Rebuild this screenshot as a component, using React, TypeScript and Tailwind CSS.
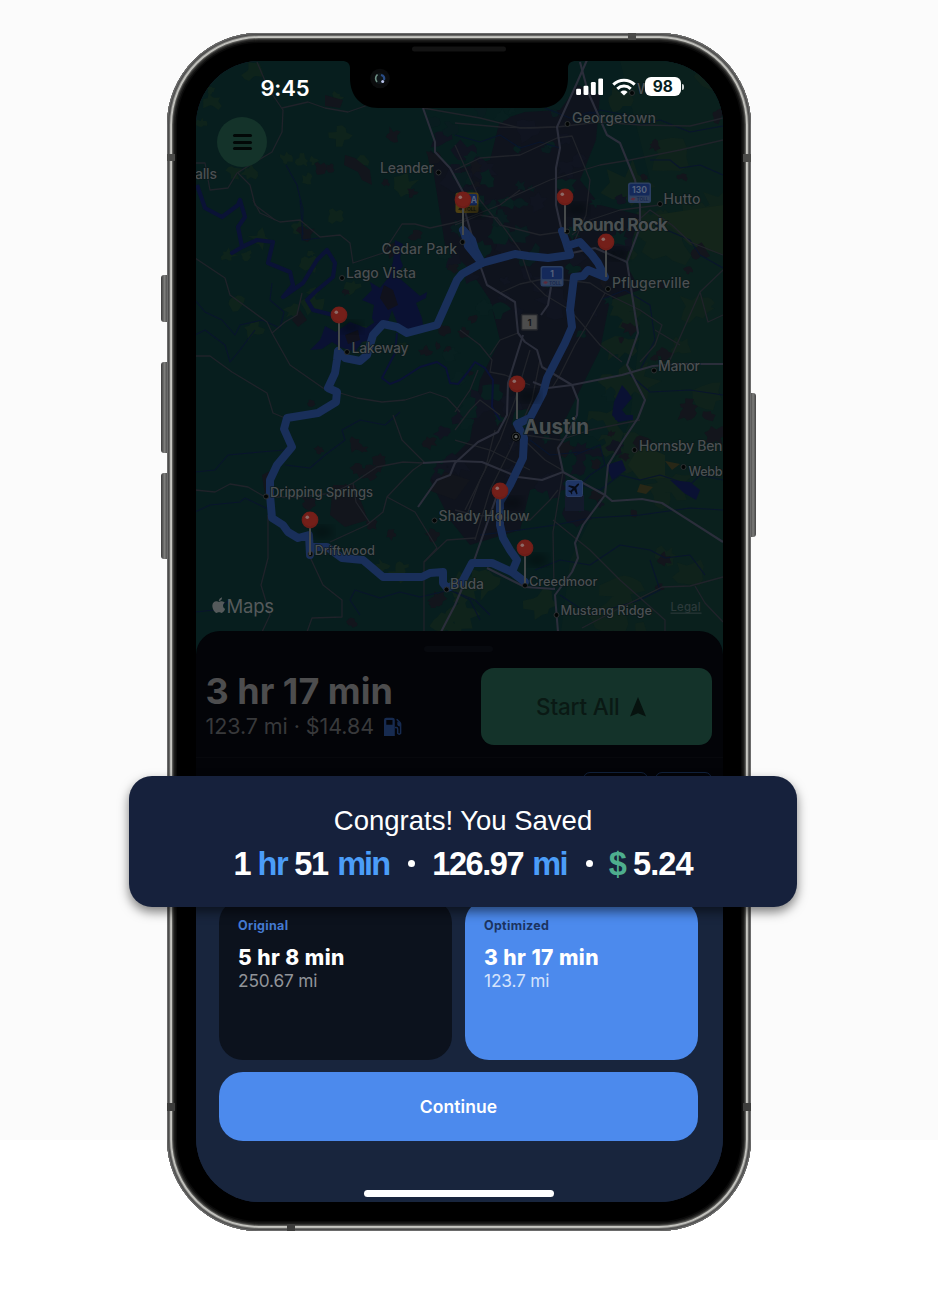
import React from "react";
import { FaApple } from "react-icons/fa";

type Pt = [number, number];

function rng(seed: number) {
  let s = seed;
  return () => {
    s = (s * 1664525 + 1013904223) % 4294967296;
    return s / 4294967296;
  };
}

function blob(cx: number, cy: number, r: number, rand: () => number) {
  const n = 13;
  let d = "";
  for (let i = 0; i < n; i++) {
    const a = (i / n) * Math.PI * 2;
    const k = r * (0.4 + rand() * 0.75);
    d += `${i ? "L" : "M"}${(cx + Math.cos(a) * k).toFixed(1)} ${(cy + Math.sin(a) * k * 0.9).toFixed(1)}`;
  }
  return d + "Z";
}

function scatter(seed: number, count: number, box: [number, number, number, number], min: number, max: number) {
  const rand = rng(seed);
  let d = "";
  for (let i = 0; i < count; i++) {
    const x = box[0] + rand() * (box[2] - box[0]);
    const y = box[1] + rand() * (box[3] - box[1]);
    d += blob(x, y, min + rand() * (max - min), rand);
  }
  return d;
}

const highways = [
  "587,60 576,85 557,127 560,148 556,168 556,205 562,232 570,255",
  "580,62 588,92 607,135 620,143 635,180 640,205 640,227 627,262 638,333 627,365 645,400 638,418 622,442 608,465 605,495 583,525 575,543 578,558 572,572 555,595 558,632",
  "423,108 435,142 435,152 450,168 463,192 466,215 480,265 487,285 515,302 518,333 525,342 537,350 542,367 572,385 578,400 577,415 568,433 558,448 563,472",
  "723,364 680,364 653,366 622,375 572,385 548,388 533,382",
  "551,287 548,305 541,315",
  "523,335 508,383 507,415 498,432 478,442 455,463 450,475 437,480 418,507",
  "423,463 455,461 482,462 518,477 542,480 563,472 605,495 612,501 642,499 662,503 723,542",
  "497,495 475,558 455,605 441,632",
  "487,568 525,587 555,589",
  "572,253 595,248 627,262",
];

const roads = [
  "195,258 225,278 230,295 267,322 272,333 290,365 323,388 340,393 357,398 382,402 405,400 430,392 447,398 460,412",
  "253,200 260,213 280,222 300,220 320,237 340,235 350,243 353,263 383,253 402,224 415,224 430,228 457,222 500,205 520,190",
  "272,333 285,322 297,315 302,293",
  "195,356 210,356 232,372 267,393 273,413 285,418",
  "257,62 268,88 283,110 282,132 272,152 250,165 237,173 228,188 210,190 205,163 195,163",
  "238,173 250,185 255,205 275,220",
  "282,108 308,102 325,108 348,112 368,105",
  "195,490 215,492 230,484 248,487 265,497 300,497 333,493 353,483 377,467 403,462 423,463",
  "268,515 268,558 261,585 270,615 262,632",
  "310,557 323,585 342,600 342,617 312,618 307,632",
  "330,542 367,525 383,512 387,497 403,480 413,470 423,463",
  "387,497 415,512 437,548 424,562 424,632",
  "393,415 402,440 425,463",
  "353,483 356,502 370,523",
  "455,123 500,127 530,128 557,127 600,122 640,125 690,126 723,118",
  "455,170 480,158 520,155 557,138 572,136 590,180 586,215 575,240",
  "505,200 550,180 600,165 630,160 680,150 723,140",
  "455,145 480,200 500,225 540,235 560,232",
  "660,205 620,210 590,220 572,235",
  "423,108 480,118 520,128 555,127",
  "455,225 480,215 497,218 520,250 530,280 545,295 570,310 583,325 600,345 622,362",
  "500,293 520,284 548,278 590,283 605,293 590,320 575,345 560,375 552,388",
  "605,293 640,310 662,325 655,345 640,362",
  "627,230 650,210 672,225 690,242 723,255",
  "723,315 708,322 700,292 723,270",
  "670,360 700,292",
  "655,330 680,345",
  "460,330 480,345 492,360 490,372 505,375 530,385",
  "490,355 500,340 518,333",
  "455,412 470,390 478,370",
  "530,350 515,400 500,440 480,480 465,520",
  "540,360 532,400 510,450 490,490 475,540",
  "495,430 485,470 465,510",
  "455,440 490,450 530,470",
  "522,438 545,460 562,470",
  "525,435 560,440 590,430 640,420",
  "563,472 553,532 554,588",
  "553,520 590,550 620,580 665,620 665,632",
  "582,628 622,607 662,587 690,586 723,577",
  "695,586 705,603 723,622",
  "455,510 475,515 530,520 550,500 558,490",
  "424,562 447,540 475,538",
  "500,415 480,400 470,410 455,430",
];

const waterways = [
  "197,185 205,208 222,217 238,205 240,200 245,217 238,227 242,247 232,253 242,247 257,240 273,242 268,263 290,272 293,285 283,297 303,283 317,260 327,250 335,263 333,277 315,292 307,300 313,310 333,315",
  "397,333 395,353 382,378 390,384 400,380 420,367 437,362 446,368 450,383 458,384 468,372 475,362 485,368 493,380 492,407 500,420",
];

const creeks = [
  "195,300 205,312 222,320 235,335 240,325 262,320 280,328 284,312 270,300 272,283",
  "195,335 205,330 225,345 230,362 240,350 255,330",
  "195,472 215,470 228,455 260,452 285,450",
  "195,512 210,505 240,502 245,498 270,510",
  "285,465 310,468 325,455 345,440 342,430 360,420 385,425 400,412",
  "300,200 303,235",
  "286,165 297,185 303,210 302,240 320,238",
  "195,612 215,610 230,600",
  "360,615 350,600 355,590 380,598 400,592 420,597 450,590 470,600 480,620",
  "455,135 480,142 500,135 520,148 540,142 560,148",
  "545,108 570,118 590,112 640,125 660,120 690,132 723,126",
  "650,160 670,160 680,168 700,165 723,175",
  "655,225 690,240 700,255 723,268",
  "573,120 600,110 640,118",
  "630,375 650,392 690,390 723,395",
  "600,300 625,290 650,305 655,340 640,370",
  "575,455 600,445 605,465 590,475 580,485 600,490 620,475 640,480 660,475 690,485 700,475 723,480",
  "455,592 475,600 490,615",
  "535,570 560,560 590,565 620,545 650,550 665,558 690,555 705,575",
  "560,595 590,615 640,600 660,590 650,560",
  "480,535 520,530 555,525 590,518 640,515 690,508 723,510",
  "530,440 550,455 580,452",
];

const route = [
  "463,230 472,240 475,250 482,263",
  "464,232 468,246 482,263",
  "562,231 566,242 570,255 548,258 528,256 515,254 482,263 462,274 457,280 437,325 407,333 397,327 383,324 373,335 367,355 360,361 345,358 338,351 337,360 335,373 328,388 337,392 336,402 318,413 287,418 284,429 292,447 277,465 270,480 270,495 272,518 283,525 288,532 298,538 309,535 310,555 312,547 327,547 342,558 363,560 383,577 422,577 430,573 443,572 443,583 447,588 462,582 472,563 492,563 512,572 525,582",
  "512,572 517,560 510,550 503,538 500,525 500,502 510,485 523,458 524,438 517,424 530,418 543,393 547,378 565,343 572,327 570,310 574,277 583,276 588,270 605,277 598,263 592,255 580,242 570,245",
];

const pins: Pt[] = [[463, 200], [565, 197], [606, 242], [339, 315], [517, 384], [500, 491], [310, 520], [525, 548]];

const towns: Pt[] = [
  [567.5, 124], [632, 93], [438.5, 172.5], [660, 204], [567, 231.5], [462.5, 242], [342, 278], [608, 289], [347, 352],
  [654, 370.5], [634.5, 450], [683.5, 467], [266, 496.5], [434.5, 520.5], [310.5, 554], [525, 585.5], [446.5, 589.5], [556.5, 615],
];

type Label = { t: string; x: number; y: number; w: number; s?: number; b?: number };
const labels: Label[] = [
  { t: "Georgetown", x: 572, y: 123, w: 84 },
  { t: "W", x: 637, y: 93.5, w: 14 },
  { t: "Leander", x: 380, y: 172.7, w: 54 },
  { t: "alls", x: 195, y: 179, w: 22 },
  { t: "Hutto", x: 663.5, y: 203.7, w: 37 },
  { t: "Round Rock", x: 572, y: 230.5, w: 96, s: 17.5, b: 700 },
  { t: "Cedar Park", x: 381.5, y: 254, w: 75.5 },
  { t: "Lago Vista", x: 346, y: 278, w: 70 },
  { t: "Pflugerville", x: 612, y: 288, w: 78 },
  { t: "Lakeway", x: 351.5, y: 352.7, w: 57 },
  { t: "Manor", x: 658, y: 370.7, w: 42 },
  { t: "Austin", x: 523.5, y: 433.7, w: 65.5, s: 20.5, b: 700 },
  { t: "Hornsby Ben", x: 639, y: 451, w: 83.5 },
  { t: "Webb", x: 688.5, y: 476, w: 34, s: 12.6 },
  { t: "Dripping Springs", x: 270, y: 497, w: 103, s: 13 },
  { t: "Shady Hollow", x: 438.5, y: 520.5, w: 91 },
  { t: "Driftwood", x: 314.5, y: 554.5, w: 60.5, s: 12.8 },
  { t: "Creedmoor", x: 529, y: 585.7, w: 68.5, s: 12.8 },
  { t: "Buda", x: 450, y: 589, w: 34 },
  { t: "Mustang Ridge", x: 560.5, y: 614.7, w: 91.5, s: 12.8 },
];

function Shield({ x, y, n, gold }: { x: number; y: number; n: string; gold?: boolean }) {
  return (
    <g>
      <rect x={x - 11.5} y={y - 10} width="23" height="20.5" rx="2.5" fill={gold ? "#4f4012" : "#2b3e61"} />
      <rect x={x - 10} y={y - 8.5} width="20" height="11.5" rx="1.5" fill="#14295a" />
      <rect x={x - 10} y={y + 4} width="20" height="5" rx="1" fill={gold ? "#4f4012" : "#34435f"} />
      <text x={gold ? x + 7 : x} y={y + 0.7} textAnchor="middle" fontSize="8.5" fontWeight="700" fill="#55627d">{n}</text>
      <text x={x + 3} y={y + 8.6} textAnchor="middle" fontSize="4.8" fontWeight="700" fill={gold ? "#14130c" : "#16284f"}>TOLL</text>
      <path d={`M${x - 9} ${y + 7}l2-2 3 1-2 2z`} fill={gold ? "#1c1a10" : "#5c2a3c"} />
    </g>
  );
}

function MapView() {
  return (
    <svg viewBox="196 61 527 600" className="block h-[600px] w-[527px] shrink-0 font-['Inter',sans-serif]">
      <defs>
        <filter id="soft" colorInterpolationFilters="sRGB"><feGaussianBlur stdDeviation="0.7" /></filter>
        <filter id="shade" colorInterpolationFilters="sRGB"><feGaussianBlur stdDeviation="4" /></filter>
      </defs>
      <rect x="190" y="55" width="540" height="610" fill="#071e1e" />
      <g filter="url(#soft)">
        <path d="M620 61H723V640H560L570 560L600 500L630 420L640 330L625 250L650 180Z" fill="#0a201d" />
        <path d={scatter(7, 34, [590, 70, 725, 640], 10, 28)} fill="#0f221b" />
        <path d={scatter(23, 30, [195, 70, 420, 350], 4, 14)} fill="#0e231b" />
        <path d={scatter(31, 12, [350, 560, 560, 640], 6, 20)} fill="#0f231b" />
        <path d="M655 215L723 205V255L690 245L672 228ZM640 445L665 455L665 478L640 480L628 465Z" fill="#14251a" />
        <path d="M430 150L455 170L490 160L500 120L525 112L560 110L578 85L600 95L596 140L580 180L600 205L640 215L625 262L640 290L610 300L600 350L575 400L560 430L562 480L530 490L520 530L470 545L450 520L430 480L470 440L480 380L500 340L490 300L470 270L445 245Z" fill="#0f131d" />
        <path d={scatter(55, 48, [440, 90, 640, 520], 4, 17)} fill="#101420" />
        <path d={scatter(99, 36, [440, 110, 620, 500], 4, 15)} fill="#081f1f" />
        <path d={scatter(13, 16, [430, 110, 560, 260], 4, 13)} fill="#091c1f" />
        <path d={scatter(71, 40, [300, 130, 480, 630], 3, 10)} fill="#12151c" />
        <path d={scatter(78, 28, [560, 110, 720, 600], 3, 12)} fill="#13151c" />
        <path d="M345 155L355 158L370 170L372 185L362 180L358 172L344 165ZM325 95L343 100L340 108L325 106ZM300 310L307 320L298 327L292 320ZM265 495L272 470L262 475ZM333 485L355 485L368 520L345 527L330 515ZM445 472L470 480L455 500L428 490Z" fill="#12151c" />
        <path d="M640 484L653 487L646 494L637 492ZM665 461L680 464L672 470Z" fill="#282716" />
        <g fill="none" stroke="#09152c" strokeWidth="1.1" strokeLinejoin="round">
          {creeks.map((p) => <polyline key={p} points={p} />)}
        </g>
        <g fill="none" stroke="#0a1236" strokeLinejoin="round">
          <polyline points={waterways[0]} strokeWidth="4.2" />
          <polyline points={waterways[1]} strokeWidth="2" />
        </g>
        <g fill="#0a1133">
          <path d="M395 240L403 244L400 258L403 266L396 275L405 283L420 296L427 292L426 298L416 303L422 318L423 325L410 332L398 325L392 310L388 322L378 330L372 318L374 305L362 300L372 290L370 282L380 288L388 278L393 262Z" />
          <path d="M325 326L336 332L350 322L366 328L375 322L383 324L372 340L362 342L355 352L340 347L332 342L322 349L310 350L320 340L322 335Z" />
          <path d="M622 385L628 392L632 398L622 410L630 420L618 422L612 415L614 402ZM615 415h18v5h-18ZM670 480L690 482L700 490L696 500L684 493ZM606 465L622 460L626 470L612 480Z" />
        </g>
        <path d="M384 285L393 290L398 305L388 310L380 298ZM345 335L358 330L360 340L348 344Z" fill="#10111c" />
        <rect x="565" y="495" width="19" height="16" fill="#131a2b" />
        <g fill="none" stroke="#20232a" strokeWidth="1.300" strokeLinejoin="round">
          {roads.map((p) => <polyline key={p} points={p} />)}
        </g>
        <g fill="none" stroke="#2b2e3b" strokeWidth="2.100" strokeLinejoin="round">
          {highways.map((p) => <polyline key={p} points={p} />)}
        </g>
      </g>
      <g fill="none" stroke="#192f5a" strokeWidth="8" strokeLinejoin="round" strokeLinecap="round">
        {route.map((p) => <polyline key={p} points={p} />)}
      </g>
      <Shield x={639.5} y={192.5} n="130" />
      <Shield x={552} y={276} n="1" />
      <Shield x={467} y={202.5} n="A" gold />
      <rect x="521.5" y="314.5" width="16" height="15.5" rx="1" fill="#4c4c4c" stroke="#22242a" strokeWidth="1.5" />
      <text x="529.5" y="326" textAnchor="middle" fontSize="9.5" fontWeight="700" fill="#17191c">1</text>
      <rect x="566" y="480.5" width="16.5" height="16" rx="2" fill="#1f3564" stroke="#2b3f68" strokeWidth="1" />
      <g transform="translate(574.3 488.4) rotate(45)" fill="#070b16">
        <path d="M0-6.6C.9-6.6 1-5 1-3.6V-1.8L6 1.4V2.8L1 1.2V4.2L2.5 5.4V6.3L0 5.6L-2.5 6.3V5.4L-1 4.2V1.2L-6 2.8V1.4L-1-1.8V-3.6C-1-5-.9-6.6 0-6.6Z" />
      </g>
      <g fill="#030606" stroke="#2c3032" strokeWidth="1">
        {towns.map(([x, y]) => <circle key={`${x}-${y}`} cx={x} cy={y} r="2.5" />)}
      </g>
      <circle cx="516" cy="436.700" r="4.700" fill="#020404" />
      <circle cx="516" cy="436.700" r="3.600" fill="none" stroke="#3c4041" strokeWidth="0.900" />
      <circle cx="516" cy="436.700" r="1.600" fill="#5c6061" />
      {labels.map((l) => (
        <text key={l.t} x={l.x} y={l.y} textLength={l.w} fontSize={l.s ?? 14} fontWeight={l.b ?? 500} fill="#4a5052" stroke="#0a1518" strokeWidth="1.2" paintOrder="stroke">
          {l.t}
        </text>
      ))}
      {pins.map(([x, y]) => (
        <g key={`${x}:${y}`}>
          <ellipse cx={x + 12} cy={y + 12} rx="11" ry="6" fill="#02080a" opacity="0.5" filter="url(#shade)" />
          <rect x={x - 1} y={y + 7} width="2" height="28" fill="#45494a" />
          <circle cx={x} cy={y} r="8.400" fill="#6c1d18" />
          <circle cx={x} cy={y - 0.8} r="7.200" fill="#741f19" />
          <circle cx={x - 2.7} cy={y - 2.8} r="1.800" fill="#8d6a66" />
        </g>
      ))}
      <FaApple x={210} y={596.5} size={17.5} color="#555a5b" />
      <text x="226.500" y="612.700" textLength="47.500" fontSize="18.500" fontWeight="400" fill="#555a5b">Maps</text>
      <text x="670.500" y="611" textLength="30" fontSize="11.300" fontWeight="500" fill="#2c393a">Legal</text>
      <rect x="670.500" y="612.600" width="31" height="1.100" fill="#2c393a" />
    </svg>
  );
}

function Menu() {
  return (
    <div className="absolute left-[21px] top-[56px] flex size-[50px] flex-col items-center justify-center gap-[3.7px] rounded-full bg-[#14332a]">
      <span className="h-[3px] w-[19px] rounded-sm bg-[#020807]" />
      <span className="h-[3px] w-[19px] rounded-sm bg-[#020807]" />
      <span className="h-[3px] w-[19px] rounded-sm bg-[#020807]" />
    </div>
  );
}

function StatusBar() {
  return (
    <div className="absolute inset-x-0 top-0 flex h-[52px] items-center justify-between pl-[64.5px] pr-[39.5px] text-white">
      <span className="mt-px text-[22px] font-semibold leading-none tracking-[-0.2px]">9:45</span>
      <div className="flex items-center">
        <svg viewBox="0 0 28 18" className="h-[17.5px] w-[27.5px]" fill="white">
          <rect x="0" y="11" width="5" height="6.5" rx="1.3" />
          <rect x="7.6" y="8" width="5" height="9.5" rx="1.3" />
          <rect x="15.2" y="4" width="5" height="13.5" rx="1.3" />
          <rect x="22.8" y="0.5" width="5" height="17" rx="1.3" />
        </svg>
        <svg viewBox="0 0 24 18" className="ml-[9px] h-[18px] w-[24px]" fill="none" stroke="white" strokeWidth="3">
          <path d="M1.3 6.6A15.4 15.4 0 0 1 22.7 6.6" />
          <path d="M5.3 10.8A9.7 9.7 0 0 1 18.7 10.8" />
          <path d="M12 17.5L8.400 13.900A5.200 5.200 0 0 1 15.600 13.900Z" fill="white" stroke="none" />
        </svg>
        <span className="-mt-px ml-[9px] flex h-[19px] w-[35.5px] items-center justify-center rounded-[6px] bg-white pt-px text-[15.5px] font-bold leading-none text-[#071e1e]">98</span>
        <span className="-mt-px ml-[1px] h-[6px] w-[2px] rounded-r-full bg-white/80" />
      </div>
    </div>
  );
}

function Notch() {
  return (
    <svg viewBox="340 43 240 66" className="absolute left-[173px] top-[10px] h-[66px] w-[240px]">
      <path d="M342 44V61C347 61 350 63.500 350 68V78C350 96 361 108 378 108H540C557 108 568 96 568 78V68C568 63.500 571 61 576 61V44Z" fill="#000" />
      <rect x="412" y="46.500" width="94" height="5" rx="2.500" fill="#131313" />
      <circle cx="380" cy="78.500" r="9.800" fill="#0b0c0d" />
      <circle cx="380" cy="78.500" r="5.500" fill="#10171b" />
      <path d="M377.500 74.500Q374 78 377 82" fill="none" stroke="#6f9084" strokeWidth="1.600" />
      <path d="M381 75Q385 76 384 80" fill="none" stroke="#2a4c86" strokeWidth="2.200" />
      <circle cx="382.700" cy="81.500" r="1.500" fill="#b9c3ea" />
    </svg>
  );
}

function TripSheet() {
  return (
    <section className="relative -mt-[30px] flex h-[215px] shrink-0 flex-col rounded-t-[24px] bg-[#030408]">
      <div className="mx-auto mt-[15px] h-[6px] w-[69px] translate-x-[-1px] rounded-full bg-[#07090e]" />
      <div className="mt-[16px] flex h-[77px] justify-between pl-[9.5px] pr-[11px]">
        <div className="flex flex-col text-[#4d4d4e]">
          <h1 className="mt-px whitespace-nowrap text-[36px] font-bold leading-[44px] tracking-[0px]">3 hr 17 min</h1>
          <div className="flex items-center text-[21.500px] leading-[27px] tracking-[-0.070px] text-[#38393b]">
            <span className="whitespace-nowrap">123.7 mi · $14.84</span>
            <svg viewBox="0 0 18 20" className="ml-[9.500px] h-[20px] w-[18px]" fill="#172b50">
              <path fillRule="evenodd" d="M0 3Q0 .7 2.300 .7H8.500Q10.800 .7 10.800 3V19H0ZM2.300 3V7.700H8.500V3Z" />
              <path d="M10.800 10.500H12.300Q13.700 10.500 13.700 12V16.300Q15.300 18 16.600 16.300V7Q16.600 6 15.800 5.200L12.700 2.200" fill="none" stroke="#172b50" strokeWidth="1.500" />
              <path d="M13.300 4.500V8Q14 9.700 16.500 9.300V6Z" />
            </svg>
          </div>
        </div>
        <button className="flex w-[231px] items-center justify-center gap-[10.500px] rounded-[13px] bg-[#14332a] pr-[11px] text-[22.500px] font-medium tracking-[-0.200px] text-[#0a1914]">
          <span className="whitespace-nowrap">Start All</span>
          <svg viewBox="0 0 16 20" className="h-[20px] w-[16px]" fill="#07130f"><path d="M8 0L16 19.500L8 16.300L0 19.500Z" /></svg>
        </button>
      </div>
      <div className="mt-[12px] h-px bg-[#07080c]" />
      <div className="mt-[14px] flex justify-end gap-[7px] pr-[11px]">
        <span className="h-[34px] w-[65px] rounded-[7px] border border-[#10213c]" />
        <span className="h-[34px] w-[57px] rounded-[7px] border border-[#10213c]" />
      </div>
    </section>
  );
}

function Card({ title, time, miles, active }: { title: string; time: string; miles: string; active?: boolean }) {
  return (
    <div className={`h-[161px] flex-1 rounded-[24px] pl-[19px] pt-[18px] ${active ? "bg-[#4c8aed]" : "bg-[#0c121d]"}`}>
      <div className={`mt-px text-[12.500px] font-bold leading-[16px] tracking-[0.300px] ${active ? "text-[#1c3461]" : "text-[#447ad2]"}`}>{title}</div>
      <div className="mt-[11px] whitespace-nowrap text-[21px] font-extrabold leading-[26px] tracking-[0.450px] text-white">{time}</div>
      <div className={`-mt-px text-[17.300px] leading-[21px] tracking-[-0.150px] ${active ? "text-[#d5e3fb]" : "text-[#919499]"}`}>{miles}</div>
    </div>
  );
}

function ResultPanel() {
  return (
    <section className="relative flex grow flex-col bg-[#18253d] px-[23px] pt-[53px]">
      <div className="flex gap-[13px] pr-[2px]">
        <Card title="Original" time="5 hr 8 min" miles="250.67 mi" />
        <Card title="Optimized" time="3 hr 17 min" miles="123.7 mi" active />
      </div>
      <button className="mt-[12px] mr-[2px] h-[69px] rounded-[24px] bg-[#4c8aed] pt-px text-[17.500px] font-semibold tracking-[0.100px] text-white">Continue</button>
      <div className="mx-auto mb-[5.500px] mt-auto h-[6.500px] w-[190px] -translate-x-px rounded-full bg-white" />
    </section>
  );
}

function SavingsBanner() {
  return (
    <div className="absolute left-[129px] top-[776px] flex h-[131px] w-[668px] flex-col items-center rounded-[23px] bg-[#16213c] pt-[28px] font-['Liberation_Sans',Arial,sans-serif] text-white shadow-[0_5px_11px_rgba(0,0,0,0.5)]">
      <p className="whitespace-nowrap text-[27.500px] leading-[34px] tracking-[0px]">Congrats! You Saved</p>
      <div className="mt-[7px] flex items-center whitespace-nowrap text-[32.500px] font-bold leading-[38px] tracking-[-1.400px]">
        <span>1</span>
        <span className="ml-[7.500px] text-[#4b9df8]">hr</span>
        <span className="ml-[7px]">51</span>
        <span className="ml-[9.500px] tracking-[-1.900px] text-[#4b9df8]">min</span>
        <span className="-mt-px ml-[19px] size-[7px] rounded-full bg-white" />
        <span className="ml-[17px]">126.97</span>
        <span className="ml-[9px] tracking-[-1.700px] text-[#4b9df8]">mi</span>
        <span className="-mt-px ml-[19px] size-[7px] rounded-full bg-white" />
        <span className="ml-[16px] text-[#4eae8e]">$</span>
        <span className="ml-[7.500px] tracking-[-0.900px]">5.24</span>
      </div>
    </div>
  );
}

const sideButton = "absolute bg-gradient-to-r from-[#3b3b3b] via-[#7d7d7b] to-[#444444]";

export default function App() {
  return (
    <main className="relative h-[1308px] w-[938px] overflow-hidden bg-[linear-gradient(#fbfbfb_0,#fbfbfb_1140px,#ffffff_1140px)] font-['Inter',sans-serif]">
      <div className="relative ml-[167px] mt-[33px] h-[1198px] w-[584px]">
        <span className={`${sideButton} -left-[6px] top-[242px] h-[47px] w-[7px] rounded-l-[3px]`} />
        <span className={`${sideButton} -left-[6px] top-[329px] h-[91px] w-[7px] rounded-l-[3px]`} />
        <span className={`${sideButton} -left-[6px] top-[440px] h-[86px] w-[7px] rounded-l-[3px]`} />
        <span className={`${sideButton} -right-[5px] top-[360px] h-[144px] w-[6px] rounded-r-[3px]`} />
        <div className="relative h-full rounded-[92px] bg-black pl-[29px] pt-[28px] shadow-[inset_0_0_0_1px_#6a6a6a,inset_0_0_0_2px_#4c4c4c,inset_0_0_0_3px_#6a6a68,inset_0_0_0_4px_#b9b9b5,inset_0_0_0_5px_#c6c6c1,inset_0_0_0_6px_#5b5b58,inset_0_0_0_7px_#333332,inset_0_0_0_8.500px_#1c1c1b,inset_0_0_0_10px_#0a0a0a]">
          <div className="relative flex h-[1141px] w-[527px] flex-col overflow-hidden rounded-[64px] bg-[#18253d]">
            <MapView />
            <StatusBar />
            <Menu />
            <TripSheet />
            <ResultPanel />
          </div>
          <Notch />
        </div>
        <span className="absolute left-0 top-[121px] h-[7px] w-[8px] bg-[#4a4a48]" />
        <span className="absolute left-0 top-[1070px] h-[8px] w-[8px] bg-[#3c3c3b]" />
        <span className="absolute right-0 top-[121px] h-[8px] w-[8px] bg-[#4a4a48]" />
        <span className="absolute right-0 top-[1070px] h-[8px] w-[8px] bg-[#3c3c3b]" />
        <span className="absolute left-[461px] top-0 h-[7px] w-[8px] bg-[#4a4a48]" />
        <span className="absolute bottom-0 left-[120px] h-[7px] w-[8px] bg-[#3c3c3b]" />
      </div>
      <SavingsBanner />
    </main>
  );
}
